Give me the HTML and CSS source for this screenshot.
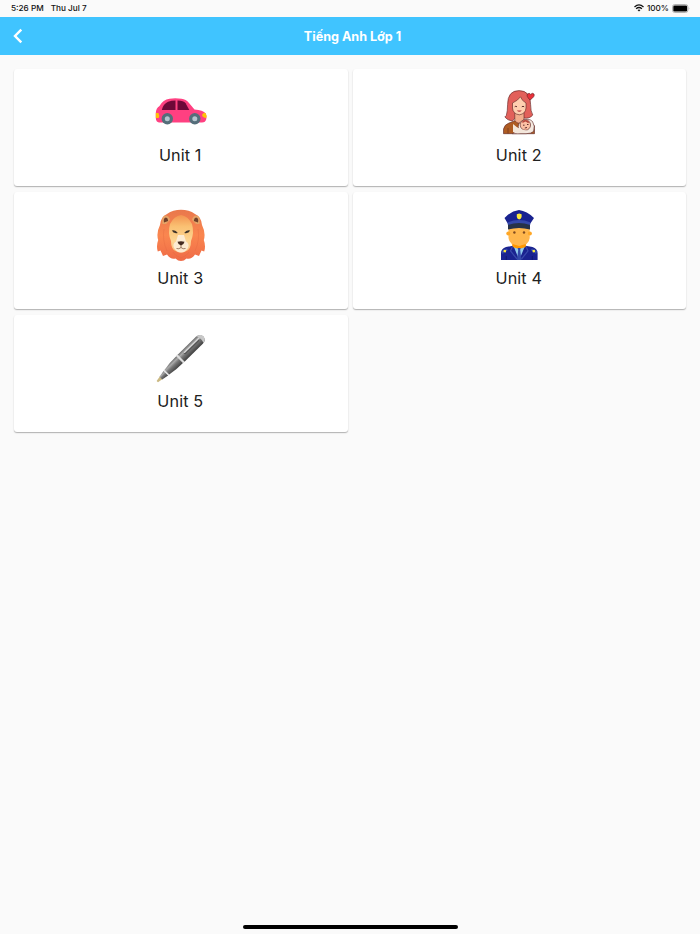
FILE: index.html
```html
<!DOCTYPE html>
<html lang="vi">
<head>
    <meta charset="UTF-8">
    <title>Tiếng Anh Lớp 1</title>
    <link rel="stylesheet" href="styles.css">
</head>
<body>
    <div class="status-bar">
        <span class="time">5:26 PM</span>
        <span class="date">Thu Jul 7</span>
        <svg class="wifi" width="10" height="8" viewBox="0 0 10 8">
            <g fill="none" stroke="#111" stroke-width="1.3">
                <path d="M.5 2.9Q5-1.2 9.500 2.900"/>
                <path d="M2.100 4.700Q5 2.200 7.900 4.700"/>
            </g>
            <path d="M3.500 6Q5 4.900 6.500 6L5 7.600Z" fill="#111"/>
        </svg>
        <span class="percent">100%</span>
        <svg class="battery" width="18" height="9" viewBox="0 0 18 9">
            <rect x=".5" y=".5" width="15.400" height="8" rx="2.300" fill="#fff" stroke="#aaa" stroke-width=".9"/>
            <rect x="1.300" y="1.500" width="13.800" height="6" rx="1.300" fill="#000"/>
            <path d="M16.800 3.200Q18 4.500 16.800 5.800Z" fill="#999"/>
        </svg>
    </div>

    <div class="app-bar">
        <svg class="back" width="10" height="16" viewBox="0 0 10 16">
            <path d="M8.300 1.600L2 8L8.300 14.400" fill="none" stroke="#fff" stroke-width="2.400"/>
        </svg>
        <h1>Tiếng Anh Lớp 1</h1>
    </div>

    <div class="units">
        <div class="card">
            <!-- car -->
            <svg class="icon" viewBox="0 0 52 52">
                <path d="M.8 27Q1 22 4.500 20Q8 13.500 14.500 12.700Q20 12 26.500 12.700Q31 13.200 34 17L39.500 23.500Q48 24 50.800 27.500Q51.800 30 51.300 33Q50.500 36.500 47 36.500H4Q1 36.200 .8 32Z" fill="#ff4081"/>
                <path d="M6.800 24Q8 18 13 15.700Q16.500 14.600 20.500 14.600V24Z" fill="#6d0838"/>
                <path d="M22.500 14.600Q28.500 14.500 30.600 17.200L34.300 24H22.500Z" fill="#6d0838"/>
                <path d="M.8 27H3.500Q4.800 29.500 3.700 32H.8Z" fill="#ffc107"/>
                <path d="M48.500 27H50.600Q52 29.500 51.300 32Q47.500 31.500 47 29Z" fill="#ffc107"/>
                <g fill="#546e7a">
                    <circle cx="12.300" cy="32.700" r="5.700"/>
                    <circle cx="39.800" cy="32.700" r="5.700"/>
                </g>
                <g fill="#b5c5ce">
                    <circle cx="12.300" cy="32.700" r="2.500"/>
                    <circle cx="39.800" cy="32.700" r="2.500"/>
                </g>
            </svg>
            <p>Unit 1</p>
        </div>

        <div class="card">
            <!-- mother and baby -->
            <svg class="icon" viewBox="0 0 52 52">
                <g stroke="#5a2424" stroke-width=".6" stroke-linejoin="round">
                    <path d="M10.500 47.700V43Q11.500 38.500 16 37L22.500 34.500H31Q39 36 41.500 40V47.700Z" fill="#ae5c22"/>
                    <path d="M13.300 29.500Q14.600 25 14.600 18.500Q14.600 4.600 26 4.600Q37.600 4.600 37.600 18.500Q37.600 25.500 39.800 29Q36.500 33 31 32L22 32L19.500 35Q14.500 34.500 11.800 31Z" fill="#e2605a"/>
                    <path d="M21.800 26V34.500Q25.500 40 31 34.500V26Z" fill="#f2ad8c"/>
                    <path d="M19.500 17Q25 14.500 27.500 10.800Q29 15 33 17V22Q32.500 28 26.300 28.800Q20 28 19.500 22Z" fill="#ffcfb0"/>
                    <path d="M37 14Q32.800 9.800 34.500 8Q36.300 6.500 37.700 8.400Q39.400 6.400 41 8Q42.300 10.500 37 14Z" fill="#e9303a"/>
                    <path d="M19.500 47.700L25.500 43Q24 37.500 29.500 34.500Q35.500 31.500 39.500 35.500Q42.500 40 40.500 45.500Q38 47.700 33 47.700Z" fill="#f4e9e0"/>
                    <circle cx="32.400" cy="39" r="5.200" fill="#fcc0a4"/>
                </g>
                <path d="M20 38Q24 42 28.500 43.500L35 45Q31 47.500 24 47.300L20 46Z" fill="#f3e6da"/>
                <path d="M29.300 35.200Q33 32.400 36.800 36.200L35 37L32.500 35.600L29.500 37Z" fill="#b8483f"/>
                <path d="M21.700 20.800Q22.800 19.700 24 20.800M28.800 20.800Q30 19.700 31.200 20.800M30 39.200H31.500M34 38.500H35.500M31.800 42L34 41.500" fill="none" stroke="#4d1d20" stroke-width=".9"/>
                <path d="M23.800 24.500Q26.300 27 28.800 24.500Z" fill="#b83239"/>
                <path d="M15 42V47.500" stroke="#652f20" stroke-width=".6"/>
            </svg>
            <p>Unit 2</p>
        </div>

        <div class="card">
            <!-- lion -->
            <svg class="icon" viewBox="0 0 52 52">
                <defs>
                    <linearGradient id="mane" x1="0" y1="0" x2="0" y2="1">
                        <stop offset="0" stop-color="#e9784c"/>
                        <stop offset=".5" stop-color="#fa864f"/>
                        <stop offset="1" stop-color="#ef6b47"/>
                    </linearGradient>
                    <linearGradient id="face" x1="0" y1="0" x2="0" y2="1">
                        <stop offset="0" stop-color="#f39350"/>
                        <stop offset=".3" stop-color="#fac072"/>
                        <stop offset=".7" stop-color="#fdd694"/>
                        <stop offset="1" stop-color="#fbbf80"/>
                    </linearGradient>
                </defs>
                <path d="M26 .8Q34 .8 40 5Q46.500 8 47 16Q51 24 48.800 31Q51 37 49.200 42.500L46.500 41.500L44 47L40 45.500Q36 51 31.500 49.500Q29 52 26 52Q23 52 20.500 49.500Q16 51 12 45.500L8 47L5.500 41.500L2.800 42.500Q1 37 3.200 31Q1 24 5 16Q5.500 8 12 5Q18 .8 26 .8Z" fill="url(#mane)"/>
                <path d="M7.500 15Q6 6.500 10.800 6.500Q14.500 7 15 11L11 15Z" fill="#e5a366"/>
                <path d="M44.500 15Q46 6.500 41.200 6.500Q37.500 7 37 11L41 15Z" fill="#e5a366"/>
                <path d="M9 13.500Q8 9 11 8.600Q13 9 13.200 12ZM43 13.500Q44 9 41 8.600Q39 9 38.800 12Z" fill="#70402a"/>
                <path d="M26 6Q33 7 37 15Q39.500 24 36 32Q36 40 31.500 42Q26 45 20.500 42Q16 40 16 32Q12.500 24 15 15Q19 7 26 6Z" fill="url(#face)"/>
                <path d="M23 26L21 32.500Q17 35 19 39Q22 43.500 26 43.500Q30 43.500 33 39Q35 35 31 32.500L29 26Z" fill="#fdebd2"/>
                <path d="M16.800 21.600Q20.500 20.500 22.800 24Q18.500 25 16.800 21.600ZM35.200 21.600Q31.500 20.500 29.200 24Q33.500 25 35.200 21.600Z" fill="#40352a"/>
                <path d="M22.500 32.700Q26 31.700 29.500 32.700Q29 35.500 26 36.500Q23 35.500 22.500 32.700Z" fill="#442b20"/>
                <path d="M26 36V38.500M21.500 39.500Q24 40.500 26 38.500Q28 40.500 30.500 39.500" fill="none" stroke="#785039" stroke-width=".7"/>
                <path d="M9 20Q7 31 12 42M43 20Q45 31 40 42M18 43Q20 47 26 49M34 43Q32 47 26 49" fill="none" stroke="#e2673e" stroke-width="1" opacity=".35"/>
            </svg>
            <p>Unit 3</p>
        </div>

        <div class="card">
            <!-- police officer -->
            <svg class="icon" viewBox="0 0 52 52">
                <path d="M19.500 34H32.500V41L26 48L19.500 41Z" fill="#ff9800"/>
                <path d="M15.500 18H36.700V29Q36 36.500 26.100 37.300Q16.500 36.500 15.500 29Z" fill="#ffb74d"/>
                <circle cx="15.300" cy="24.500" r="2" fill="#ffa726"/>
                <circle cx="36.900" cy="24.500" r="2" fill="#ffa726"/>
                <path d="M11.500 9Q18 2 26 1Q34 2 41 9L37 15V18H15V15Z" fill="#1a2390"/>
                <path d="M15 14.500Q26 10 37 14.500V20.500Q26 17.500 15 20.500Z" fill="#263248"/>
                <path d="M14.800 13.300Q26 8.800 37.200 13.300V16Q26 11.800 14.800 16Z" fill="#3448ab"/>
                <path d="M23.800 5.200L26.200 4.400L28.600 5.200V8Q28 10 26.200 10.500Q24.300 10 23.800 8Z" fill="#ffeb3b"/>
                <circle cx="21.400" cy="23.500" r="1.200" fill="#814c20"/>
                <circle cx="31" cy="23.500" r="1.200" fill="#814c20"/>
                <path d="M8 51V44Q8.300 39.500 13 38L20 36.800L26.200 43L32.500 36.800L39.500 38Q44.300 39.500 44.600 44V51Z" fill="#1a2390"/>
                <path d="M20.500 37L26.200 51L32 37L26.200 40Z" fill="#8fcbed"/>
                <path d="M19.500 35L26.200 37L32.800 35V38L26.200 40L19.500 38Z" fill="#ff9800"/>
                <path d="M24.800 39H27.600L27.200 41L28.500 51H24L25.200 41Z" fill="#344aaa"/>
                <path d="M19.500 37.500L17.500 42L24 50M33 37.500L35 42L28.500 50" fill="none" stroke="#3849ab" stroke-width="1.200"/>
                <path d="M8.200 42L13.500 39.500L15 41L9.500 45ZM44.400 42L39 39.500L37.500 41L43 45Z" fill="#344aaa"/>
                <path d="M10.800 40.800L13.300 41.200L12.700 43.500L10.500 43ZM41.800 40.800L39.300 41.200L39.900 43.500L42.100 43Z" fill="#ffeb3b"/>
                <path d="M13.300 47V51M39.300 47V51" stroke="#0d1466" stroke-width=".7"/>
            </svg>
            <p>Unit 4</p>
        </div>

        <div class="card">
            <!-- pen -->
            <svg class="icon" viewBox="0 0 52 52">
                <defs>
                    <linearGradient id="barrel" x1="0" y1="0" x2="0" y2="1">
                        <stop offset="0" stop-color="#6a6a6a"/>
                        <stop offset=".25" stop-color="#aaa"/>
                        <stop offset=".5" stop-color="#777"/>
                        <stop offset="1" stop-color="#404040"/>
                    </linearGradient>
                </defs>
                <g transform="translate(2.300 49.600) rotate(-44.500)">
                    <path d="M0-1L6-2V2L0 1Z" fill="#cbb983"/>
                    <path d="M5-1.900L12-3.200V3.200L5 1.900Z" fill="url(#barrel)"/>
                    <path d="M13-3.300Q22-5 32-4.800V4.800Q22 5 13 3.300Z" fill="url(#barrel)"/>
                    <path d="M33-4.900H59Q64-4.700 64.500 0Q64 4.700 59 4.900H33Z" fill="url(#barrel)"/>
                    <path d="M12-3.400H13.500V3.400H12ZM31.200-5.100H33.400V5.100H31.200Z" fill="#ddd"/>
                    <path d="M60-4.700Q64.500-4 64.600 0Q64.500 4 60 4.800Q62 0 60-4.700Z" fill="#c8c8c8"/>
                    <path d="M40-1H58" stroke="#555" stroke-width="2.600" stroke-linecap="round"/>
                    <path d="M40-1.800H60" stroke="#d8d8d8" stroke-width="1.500" stroke-linecap="round"/>
                </g>
            </svg>
            <p>Unit 5</p>
        </div>
    </div>

    <div class="home-indicator"></div>
</body>
</html>
```

FILE: styles.css
```css
* {
    box-sizing: border-box;
}
body {
    margin: 0;
    height: 934px;
    display: flex;
    flex-direction: column;
    background: #fafafa;
    font-family: Inter, "Liberation Sans", sans-serif;
    color: #212121;
    overflow: hidden;
}
.status-bar {
    height: 17px;
    padding: 0 10px 1px 11px;
    display: flex;
    align-items: center;
    font-size: 8.2px;
    font-weight: 500;
    color: #111;
}
.date {
    margin-left: 7px;
}
.wifi {
    margin-left: auto;
}
.percent {
    margin: 0 3px;
}
.app-bar {
    height: 38px;
    padding: 0 13px;
    display: flex;
    align-items: center;
    background: #40c4ff;
    color: #fff;
}
.app-bar h1 {
    flex: 1;
    margin: 0;
    padding-right: 5px;
    text-align: center;
    font-size: 12.6px;
    font-weight: 700;
}
.units {
    display: grid;
    grid-template-columns: repeat(2, 1fr);
    grid-auto-rows: 117px;
    gap: 6px 5px;
    padding: 14px 14px 0;
}
.card {
    display: flex;
    flex-direction: column;
    align-items: center;
    padding-top: 17px;
    background: #fff;
    border-radius: 3px;
    box-shadow: 0 1px 1px rgba(0,0,0,0.22), 0 1px 2px rgba(0,0,0,0.1);
}
.icon {
    width: 52px;
    height: 52px;
}
.card p {
    margin: 7px 0 0;
    padding-right: 1px;
    font-size: 16.2px;
    line-height: 20px;
    letter-spacing: 0.1px;
}
.home-indicator {
    width: 215px;
    height: 4px;
    margin: auto auto 5px;
    border-radius: 2px;
    background: #000;
}
```
